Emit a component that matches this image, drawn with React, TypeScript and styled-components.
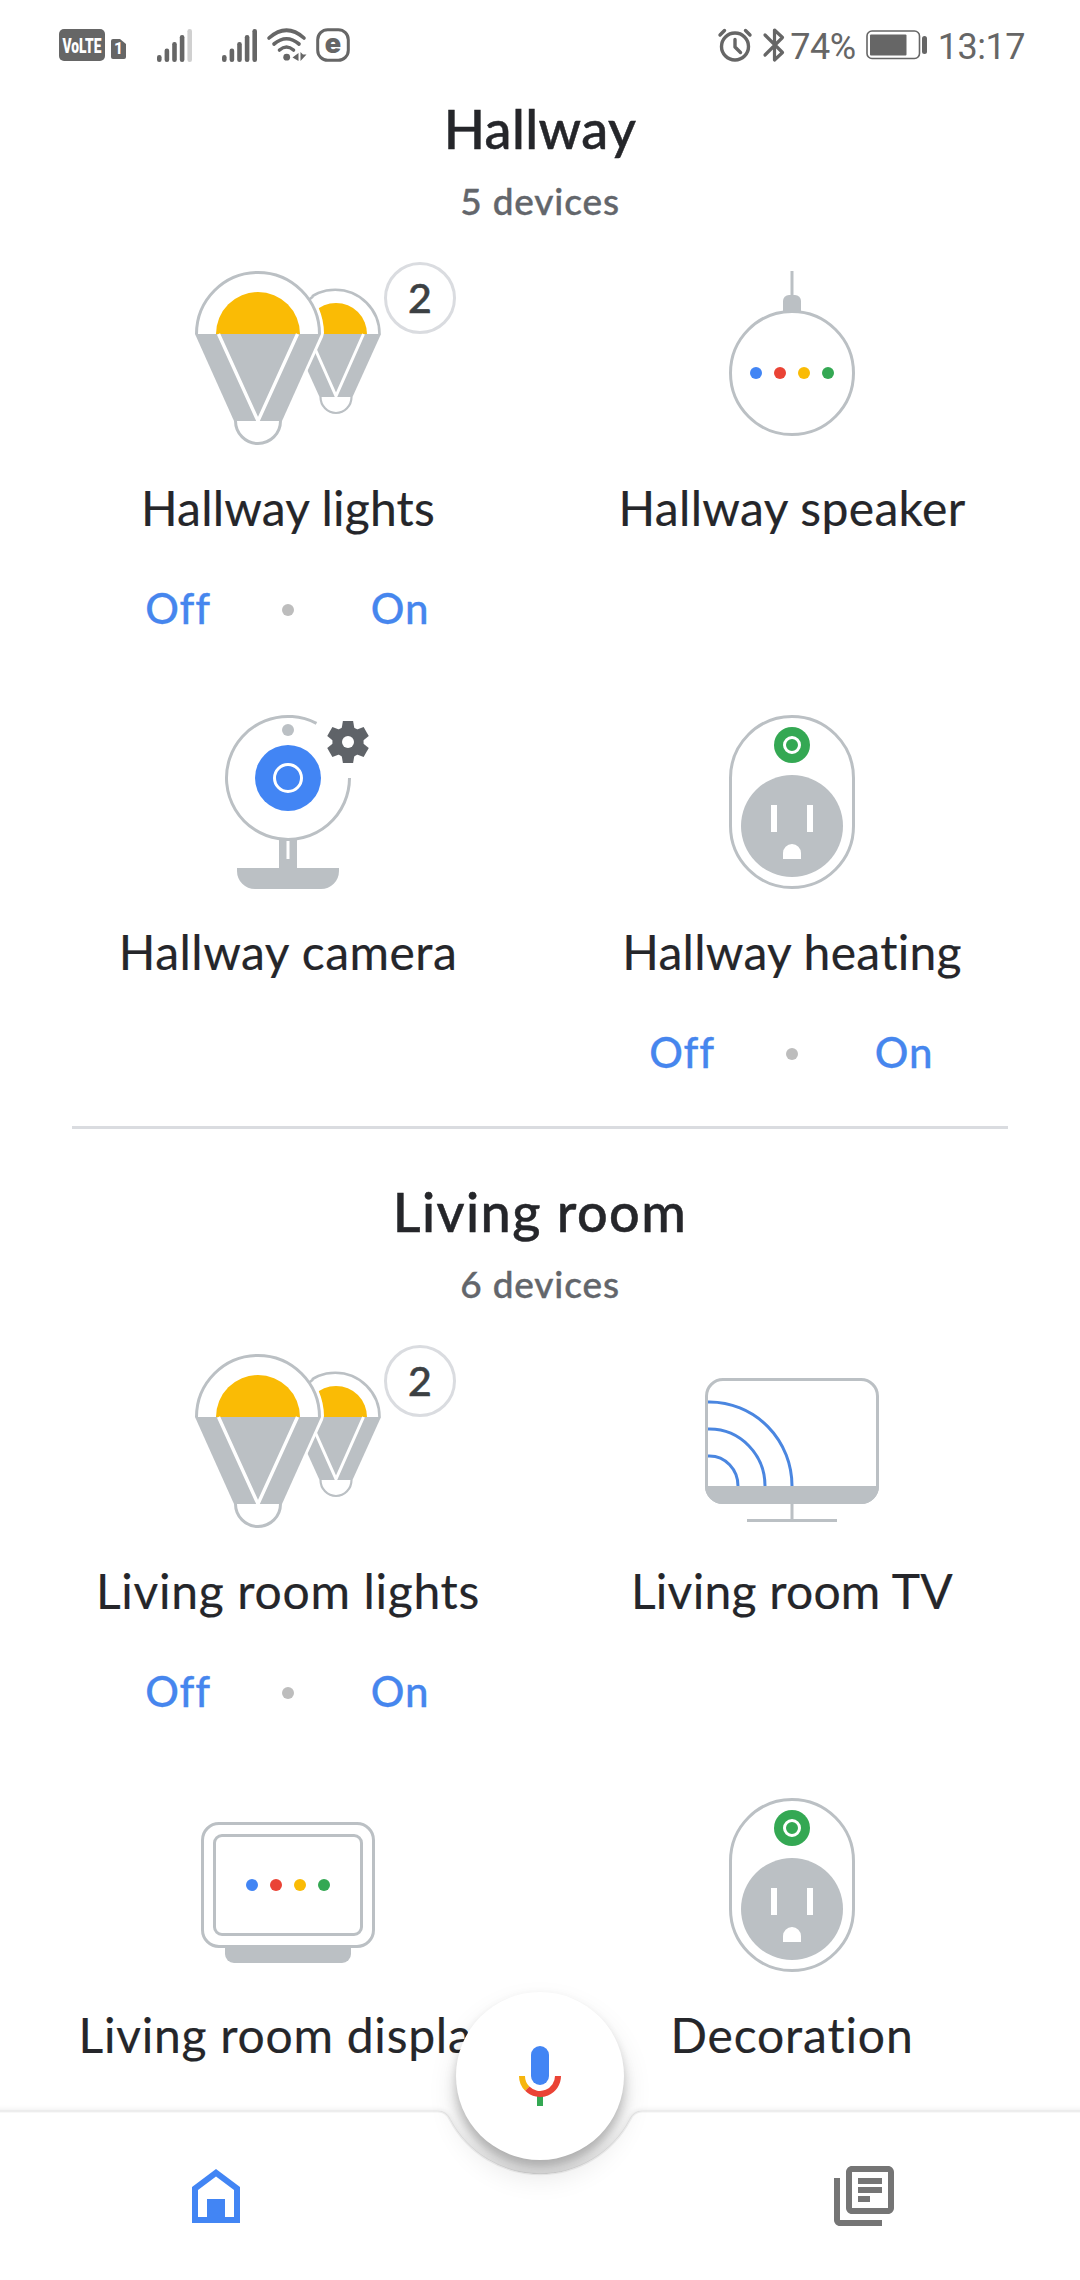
import React from "react";
import styled, { createGlobalStyle } from "styled-components";

const GlobalStyle = createGlobalStyle`
  * { box-sizing: border-box; }
  html, body { margin: 0; padding: 0; background: #fff; }
  body { font-family: Lato, "Liberation Sans", sans-serif; color: #25262a; }
`;

const GREY = "#bbc0c4";
const BLUE = "#4285f4";
const RED = "#ea4335";
const YELLOW = "#fabb05";
const GREEN = "#34a853";
const STATUS = "#666";

const Screen = styled.div`
  position: relative;
  width: 1080px;
  height: 2280px;
  overflow: hidden;
  background: #fff;
  display: flex;
  flex-direction: column;
`;

const StatusBar = styled.header`
  height: 90px;
  flex: none;
  display: flex;
  justify-content: space-between;
  padding: 0 55px 0 59px;
  color: ${STATUS};
`;

const StatusGroup = styled.div`
  display: flex;
  align-items: center;
`;

const StatusIcon = styled.svg<{ $gap?: number }>`
  display: block;
  flex: none;
  overflow: visible;
  margin-left: ${(p) => p.$gap ?? 0}px;
`;

const NetworkBadge = styled.span`
  height: 32px;
  width: 46px;
  display: flex;
  align-items: center;
  justify-content: center;
  border-radius: 5px;
  background: ${STATUS};
`;

const SimBadge = styled.span`
  width: 15px;
  height: 20px;
  margin: 8px 0 0 6px;
  border-radius: 2px;
  background: ${STATUS};
  clip-path: polygon(0 0, 60% 0, 100% 25%, 100% 100%, 0 100%);
  color: #fff;
  font: 700 16px/20px Roboto, sans-serif;
  text-align: center;
`;

const StatusText = styled.span<{ $gap: number; $tracking: number }>`
  font-family: Roboto, sans-serif;
  font-size: 36px;
  line-height: 44px;
  margin-left: ${(p) => p.$gap}px;
  padding-top: 3px;
  letter-spacing: ${(p) => p.$tracking}px;
  white-space: nowrap;
`;

const Rooms = styled.main`
  display: flex;
  flex-direction: column;
  padding: 9px 36px 0;
`;

const Room = styled.section`
  display: flex;
  flex-direction: column;
`;

const RoomName = styled.h2<{ $tracking: number }>`
  margin: 0;
  text-align: center;
  font-size: 54px;
  line-height: 60px;
  font-weight: 500;
  -webkit-text-stroke: 0.5px currentColor;
  letter-spacing: ${(p) => p.$tracking}px;
`;

const DeviceCount = styled.p`
  margin: 18px 0 46px;
  text-align: center;
  font-size: 37px;
  line-height: 48px;
  font-weight: 500;
  -webkit-text-stroke: 0.4px currentColor;
  letter-spacing: 0.85px;
  color: #63666b;
`;

const DeviceGrid = styled.div`
  display: grid;
  grid-template-columns: 1fr 1fr;
  grid-auto-rows: 367px;
  row-gap: 77px;
`;

const Device = styled.article`
  display: flex;
  flex-direction: column;
  align-items: center;
`;

const Picture = styled.div`
  position: relative;
  height: 174px;
  display: flex;
  justify-content: center;
`;

const CountBadge = styled.span`
  position: absolute;
  top: -9px;
  right: -75px;
  width: 72px;
  height: 72px;
  border: 3px solid #dadce0;
  border-radius: 50%;
  background: #fff;
  color: #3c4043;
  font-size: 41px;
  line-height: 65px;
  font-weight: 500;
  -webkit-text-stroke: 0.6px currentColor;
  text-align: center;
`;

const DeviceName = styled.h3<{ $tracking: number }>`
  margin: 33px 0 0;
  font-size: 48px;
  line-height: 60px;
  font-weight: 400;
  -webkit-text-stroke: 0.2px currentColor;
  letter-spacing: ${(p) => p.$tracking}px;
  white-space: nowrap;
`;

const Controls = styled.div`
  display: flex;
  align-items: center;
  gap: 54px;
  margin-top: 40px;
  height: 60px;
`;

const Toggle = styled.button<{ $inset?: number }>`
  width: 100px;
  padding: 0 0 0 ${(p) => p.$inset ?? 0}px;
  border: 0;
  background: none;
  color: #4686ee;
  font: 500 42px/60px Lato, sans-serif;
  -webkit-text-stroke: 0.3px currentColor;
  letter-spacing: 0.8px;
  text-align: center;
`;

const Dot = styled.i`
  width: 12px;
  height: 12px;
  margin-top: 4px;
  border-radius: 50%;
  background: #bdbdbd;
`;

const Divider = styled.hr`
  width: 936px;
  height: 3px;
  margin: 44px auto 53px;
  border: 0;
  background: #dadce0;
`;

const BottomBar = styled.nav`
  position: absolute;
  left: 0;
  right: 0;
  bottom: 0;
  height: 300px;
`;

const BarSurface = styled.svg`
  position: absolute;
  inset: 0;
`;

const Tabs = styled.div`
  position: relative;
  display: flex;
  justify-content: space-between;
  padding: 162px 162px 0;
`;

const Tab = styled.button`
  width: 108px;
  height: 108px;
  padding: 0;
  border: 0;
  background: none;
  display: flex;
  align-items: center;
  justify-content: center;
`;

const MicButton = styled.button`
  position: absolute;
  left: 456px;
  top: 12px;
  width: 168px;
  height: 168px;
  padding: 0;
  border: 0;
  border-radius: 50%;
  background: #fff;
  box-shadow: 0 15px 30px rgba(0, 0, 0, 0.11), 0 2px 9px rgba(0, 0, 0, 0.06);
  display: flex;
  align-items: center;
  justify-content: center;
`;

const bar = (x: number, top: number, fill = STATUS) => (
  <rect key={x} x={x} y={top} width="4.6" height={34 - top} rx="2.2" fill={fill} />
);

const Signal = ({ gap, weak }: { gap: number; weak?: boolean }) => (
  <StatusIcon $gap={gap} width="36" height="34" viewBox="0 0 36 34">
    {bar(0, 27)}
    {bar(7.6, 20.5)}
    {bar(15.2, 14)}
    {bar(22.8, 7)}
    {bar(30.4, 1, weak ? "#d0d0d0" : STATUS)}
  </StatusIcon>
);

const FourDots = ({ y, x }: { x: number; y: number }) => (
  <g>
    {[BLUE, RED, YELLOW, GREEN].map((c, i) => (
      <circle key={c} cx={x + i * 8} cy={y} r="2" fill={c} />
    ))}
  </g>
);

const Lights = () => (
  <svg width="186" height="174" viewBox="0 0 186 174">
    <path d="M96 63a44.250 44.250 0 0 1 88.500 0" fill="#fff" stroke={GREY} strokeWidth="2.600" />
    <path d="M110 63a31 31 0 0 1 62 0z" fill={YELLOW} />
    <path d="M96 63H186L157.500 126H124.500z" fill={GREY} />
    <path d="M113.500 63L141 125L168.500 63" fill="none" stroke="#fff" strokeWidth="3" />
    <path d="M125.500 126a15.500 16 0 0 0 31 0" fill="#fff" stroke={GREY} strokeWidth="2.200" />
    <path d="M63 -3A66 66 0 0 1 129 62L128 66L84 162H60V-3z" fill="#fff" />
    <path d="M113 29.500l5 -4" stroke={GREY} strokeWidth="2.600" />
    <path d="M1.500 63a61.500 61.500 0 0 1 123 0" fill="#fff" stroke={GREY} strokeWidth="3" />
    <path d="M21 63a42 42 0 0 1 84 0z" fill={YELLOW} />
    <path d="M0 63H126L87 150H39z" fill={GREY} />
    <path d="M23.500 63L63 150L102.500 63" fill="none" stroke="#fff" strokeWidth="3.400" />
    <path d="M40.500 150a22.500 22.500 0 0 0 45 0z" fill="#fff" />
    <path d="M40.500 150a22.500 22.500 0 0 0 45 0" fill="none" stroke={GREY} strokeWidth="3" />
  </svg>
);

const Speaker = () => (
  <svg width="174" height="174" viewBox="0 0 58 58">
    <path d="M29 0v10" stroke={GREY} />
    <circle cx="29" cy="34" r="20.500" fill="#fff" stroke={GREY} />
    <path d="M26 14v-4a2 2 0 0 1 2-2h2a2 2 0 0 1 2 2v4z" fill={GREY} />
    <FourDots x={17} y={34} />
  </svg>
);

const Camera = () => (
  <svg width="174" height="174" viewBox="0 0 58 58" overflow="visible">
    <path d="M38.500 2.800A20.500 20.500 0 1 0 49.500 21" fill="none" stroke={GREY} />
    <circle cx="29" cy="5" r="2" fill={GREY} />
    <circle cx="29" cy="21" r="11" fill={BLUE} />
    <circle cx="29" cy="21" r="4.500" fill="none" stroke="#fff" />
    <path d="M26 41h6v10h14v1a6 6 0 0 1-6 6H18a6 6 0 0 1-6-6v-1h14z" fill={GREY} />
    <path d="M29 42v6" stroke="#fff" />
    <g transform="translate(49 9)" fill="#5f6368">
      {[0, 60, 120].map((a) => (
        <path key={a} transform={`rotate(${a})`} d="M-1.700 -7h3.400l.5 3v8l-.5 3h-3.400l-.5 -3v-8z" />
      ))}
      <circle r="5.200" />
      <circle r="2" fill="#fff" />
    </g>
  </svg>
);

const Outlet = () => (
  <svg width="174" height="174" viewBox="0 0 58 58">
    <rect x="8.500" y=".5" width="41" height="57" rx="20.500" fill="#fff" stroke={GREY} />
    <circle cx="29" cy="10" r="6" fill={GREEN} />
    <circle cx="29" cy="10" r="2.500" fill="none" stroke="#fff" />
    <circle cx="29" cy="37" r="17" fill={GREY} />
    <path d="M22 30h2v9h-2zM34 30h2v9h-2zM26 48v-2a3 3 0 0 1 6 0v2z" fill="#fff" />
  </svg>
);

const Television = () => (
  <svg width="174" height="174" viewBox="0 0 58 58">
    <rect x=".5" y="8.500" width="57" height="41" rx="5.500" fill="#fff" stroke={GREY} />
    <path d="M0 44h58a6 6 0 0 1-6 6H6a6 6 0 0 1-6-6z" fill={GREY} />
    <path d="M1 16h.5A27.500 28 0 0 1 29 44M1 25h.5A18.500 19 0 0 1 20 44M1 34h.5A9.500 10 0 0 1 11 44" fill="none" stroke="#4a86e0" />
    <path d="M29 50v5M14 55.500h30" stroke={GREY} />
  </svg>
);

const Display = () => (
  <svg width="174" height="174" viewBox="0 0 58 58">
    <path d="M8 49h42v3a3 3 0 0 1-3 3H11a3 3 0 0 1-3-3z" fill={GREY} />
    <rect x=".5" y="8.500" width="57" height="41" rx="5.500" fill="#fff" stroke={GREY} />
    <rect x="4.500" y="12.500" width="49" height="33" rx="2.500" fill="#fff" stroke={GREY} />
    <FourDots x={17} y={29} />
  </svg>
);

type Item = { name: string; tracking: number; art: React.ReactNode; count?: number; onOff?: boolean };
type RoomData = { name: string; tracking: number; count: string; items: Item[] };

const rooms: RoomData[] = [
  {
    name: "Hallway",
    tracking: 0.4,
    count: "5 devices",
    items: [
      { name: "Hallway lights", tracking: 0.2, art: <Lights />, count: 2, onOff: true },
      { name: "Hallway speaker", tracking: 0.35, art: <Speaker /> },
      { name: "Hallway camera", tracking: 0.5, art: <Camera /> },
      { name: "Hallway heating", tracking: 0.3, art: <Outlet />, onOff: true },
    ],
  },
  {
    name: "Living room",
    tracking: 1.4,
    count: "6 devices",
    items: [
      { name: "Living room lights", tracking: 0.7, art: <Lights />, count: 2, onOff: true },
      { name: "Living room TV", tracking: 0.25, art: <Television /> },
      { name: "Living room display", tracking: 0.75, art: <Display /> },
      { name: "Decoration", tracking: 0.85, art: <Outlet /> },
    ],
  },
];

const RoomPanel = ({ room }: { room: RoomData }) => (
  <Room>
    <RoomName $tracking={room.tracking}>{room.name}</RoomName>
    <DeviceCount>{room.count}</DeviceCount>
    <DeviceGrid>
      {room.items.map((d) => (
        <Device key={d.name}>
          <Picture>
            {d.art}
            {d.count && <CountBadge>{d.count}</CountBadge>}
          </Picture>
          <DeviceName $tracking={d.tracking}>{d.name}</DeviceName>
          {d.onOff && (
            <Controls>
              <Toggle>Off</Toggle>
              <Dot />
              <Toggle $inset={4}>On</Toggle>
            </Controls>
          )}
        </Device>
      ))}
    </DeviceGrid>
  </Room>
);

const NOTCH =
  "M-20 131.500H438Q446 131.500 450 140A101.800 101.800 0 0 0 630 140Q634 131.500 642 131.500H1100";

export default function App() {
  return (
    <Screen>
      <GlobalStyle />
      <StatusBar>
        <StatusGroup>
          <NetworkBadge>
            <StatusIcon width="40" height="26" viewBox="0 0 40 26">
              <text x="0.500" y="20.500" textLength="39" lengthAdjust="spacingAndGlyphs" fontFamily="Roboto, sans-serif" fontSize="21" fontWeight="900" fill="#fff">VoLTE</text>
            </StatusIcon>
          </NetworkBadge>
          <SimBadge>1</SimBadge>
          <Signal gap={31} weak />
          <Signal gap={29} />
          <StatusIcon $gap={9} width="40" height="34" viewBox="0 0 40 34" fill="none" stroke={STATUS} strokeWidth="3.600" strokeLinecap="round">
            <path d="M2 10Q19.500 -5.500 37 10M7 16Q19.500 5.500 32 16M12.500 22Q19.500 16 26.500 22" />
            <circle cx="19.700" cy="29.200" r="3.400" fill={STATUS} stroke="none" />
            <path d="M31.500 25v8l-6-3.600z" fill={STATUS} stroke="none" />
            <path d="M33.500 24v9l6-6.500h-3.500z" fill={STATUS} stroke="none" />
          </StatusIcon>
          <StatusIcon $gap={9} width="34" height="34" viewBox="0 0 34 34">
            <rect x="1.700" y="1.700" width="30.600" height="30.600" rx="10" fill="none" stroke={STATUS} strokeWidth="3" />
            <text x="17" y="24.500" textAnchor="middle" fontFamily="Inter, sans-serif" fontSize="27" fontWeight="900" fill={STATUS}>e</text>
          </StatusIcon>
        </StatusGroup>
        <StatusGroup>
          <StatusIcon width="34" height="36" viewBox="0 0 34 36" fill="none" stroke={STATUS} strokeWidth="3.400" strokeLinecap="round" strokeLinejoin="round">
            <circle cx="17" cy="19.500" r="13.500" />
            <path d="M17 12.500v7.500l5.500 5.500M2 8l4.500-4.500M32 8l-4.500-4.500" />
          </StatusIcon>
          <StatusIcon $gap={11} width="22" height="36" viewBox="0 0 22 36" fill="none" stroke={STATUS} strokeWidth="3.200" strokeLinecap="round" strokeLinejoin="round">
            <path d="M2 8L19.500 25.500L11.500 33V3L19.500 10.500L2 28" />
          </StatusIcon>
          <StatusText $gap={5} $tracking={-0.4}>74%</StatusText>
          <StatusIcon $gap={10} width="62" height="30" viewBox="0 0 62 30">
            <rect x="1" y="1" width="52.500" height="27.500" rx="5" fill="none" stroke={STATUS} strokeWidth="1.600" />
            <rect x="4" y="4.500" width="36.500" height="21" rx="1" fill={STATUS} />
            <rect x="56" y="6" width="5" height="18" rx="2.500" fill={STATUS} />
          </StatusIcon>
          <StatusText $gap={10} $tracking={-0.5}>13:17</StatusText>
        </StatusGroup>
      </StatusBar>

      <Rooms>
        <RoomPanel room={rooms[0]} />
        <Divider />
        <RoomPanel room={rooms[1]} />
      </Rooms>

      <BottomBar>
        <BarSurface width="1080" height="300" viewBox="0 0 1080 300">
          <defs>
            <filter id="edge" x="-5%" y="-20%" width="110%" height="140%">
              <feGaussianBlur stdDeviation="2" />
            </filter>
            <filter id="soft" x="-50%" y="-50%" width="200%" height="200%">
              <feGaussianBlur stdDeviation="7" />
            </filter>
            <clipPath id="notch">
              <path d={`${NOTCH}V0H-20z`} />
            </clipPath>
          </defs>
          <g clipPath="url(#notch)">
            <circle cx="540" cy="109" r="83" fill="#000" opacity=".21" filter="url(#soft)" />
            <path d={NOTCH} fill="none" stroke="#000" strokeOpacity=".08" strokeWidth="4" filter="url(#edge)" />
          </g>
          <path d={`${NOTCH}V300H-20z`} fill="#fff" />
          <path d={NOTCH} fill="none" stroke="#000" strokeOpacity=".06" strokeWidth="2" />
        </BarSurface>
        <Tabs>
          <Tab aria-label="Home">
            <svg width="72" height="72" viewBox="0 0 24 24" fill={BLUE}>
              <path d="M12 3L4 9v12h16V9zM18 19h-3v-6H9v6H6v-9l6-4.500 6 4.500z" />
            </svg>
          </Tab>
          <Tab aria-label="Feed">
            <svg width="72" height="72" viewBox="0 0 24 24" fill="#757575">
              <path d="M4 6H2v14c0 1.100.9 2 2 2h14v-2H4V6zm16-4H8c-1.100 0-2 .9-2 2v12c0 1.100.9 2 2 2h12c1.100 0 2-.9 2-2V4c0-1.100-.9-2-2-2zm0 14H8V4h12v12zM10 9h8v2h-8zm0 3h4v2h-4zm0-6h8v2h-8z" />
            </svg>
          </Tab>
        </Tabs>
        <MicButton aria-label="Assistant">
          <svg width="72" height="72" viewBox="0 0 24 24">
            <rect x="9" y="2" width="6" height="13" rx="3" fill={BLUE} />
            <path d="M11 18h2v4h-2z" fill={GREEN} />
            <path d="M6 12a6 6 0 0 0 1.760 4.240" fill="none" stroke="#f6b50d" strokeWidth="2" />
            <path d="M7.760 16.240A6 6 0 0 0 18 12" fill="none" stroke={RED} strokeWidth="2" />
          </svg>
        </MicButton>
      </BottomBar>
    </Screen>
  );
}
